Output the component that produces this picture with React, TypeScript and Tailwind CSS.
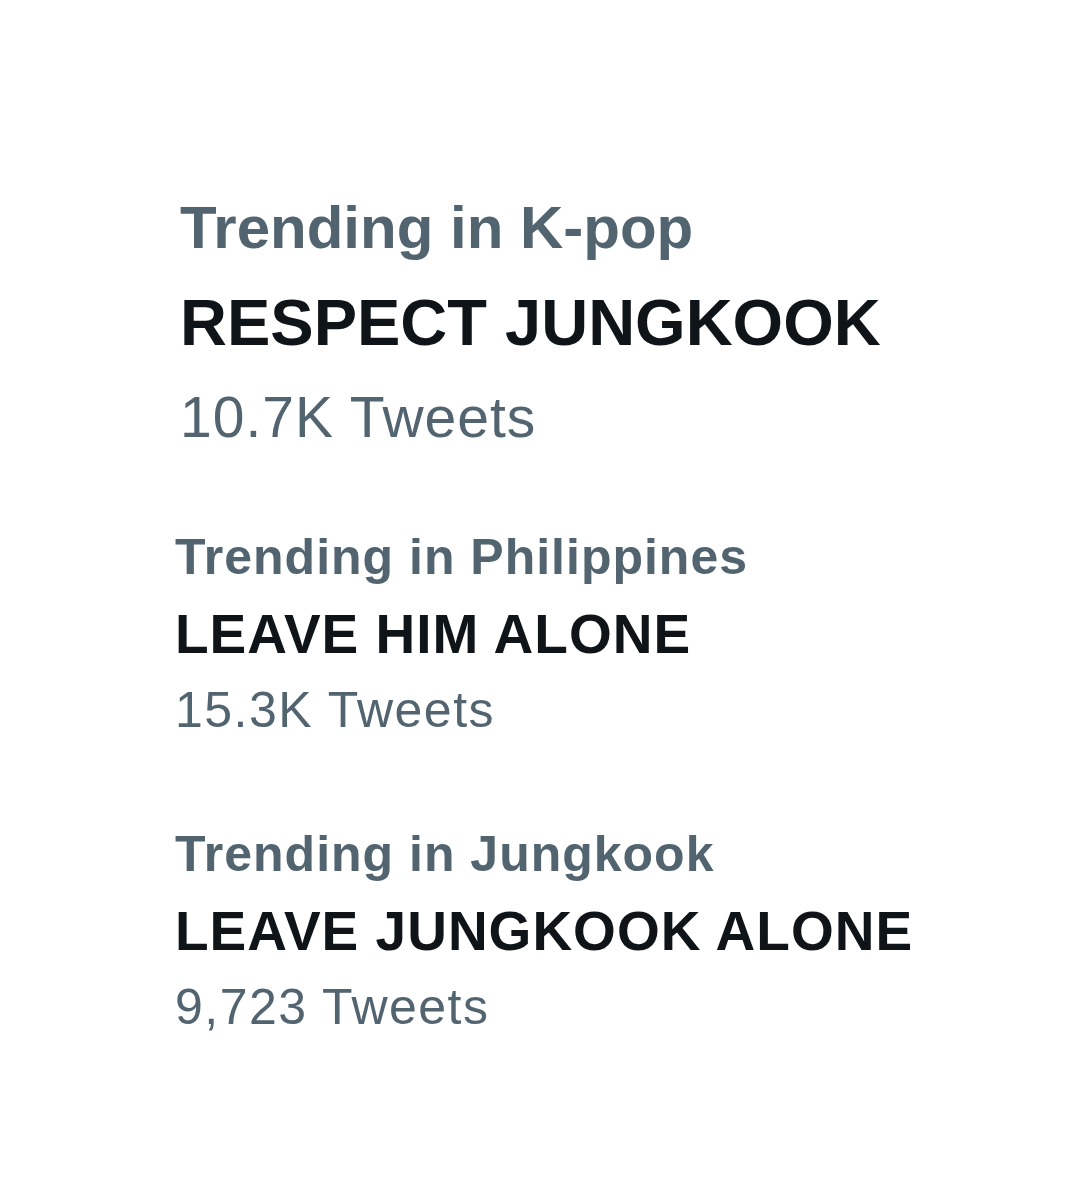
export default function App() {
  return (
    <div className="min-h-[1200px] w-full bg-white font-['Liberation_Sans',Arial,sans-serif]">
      <div className="flex flex-col pt-[180px]">
        <div className="flex flex-col pl-[180px]">
          <div className="text-[60px] leading-[95px] font-bold text-[#536471]">Trending in K-pop</div>
          <div className="text-[65px] leading-[95px] font-bold text-[#0f1419]">RESPECT JUNGKOOK</div>
          <div className="text-[57px] leading-[95px] tracking-[1px] text-[#536471]">10.7K Tweets</div>
        </div>
        <div className="mt-[54px] flex flex-col pl-[175px]">
          <div className="text-[50px] leading-[77px] tracking-[1px] font-bold text-[#536471]">Trending in Philippines</div>
          <div className="text-[55px] leading-[77px] tracking-[1px] font-bold text-[#0f1419]">LEAVE HIM ALONE</div>
          <div className="text-[50px] leading-[75px] tracking-[1.5px] text-[#536471]">15.3K Tweets</div>
        </div>
        <div className="mt-[68px] flex flex-col pl-[175px]">
          <div className="text-[50px] leading-[77px] tracking-[1px] font-bold text-[#536471]">Trending in Jungkook</div>
          <div className="text-[55px] leading-[77px] tracking-[1px] font-bold text-[#0f1419]">LEAVE JUNGKOOK ALONE</div>
          <div className="text-[50px] leading-[75px] tracking-[1.5px] text-[#536471]">9,723 Tweets</div>
        </div>
      </div>
    </div>
  );
}
